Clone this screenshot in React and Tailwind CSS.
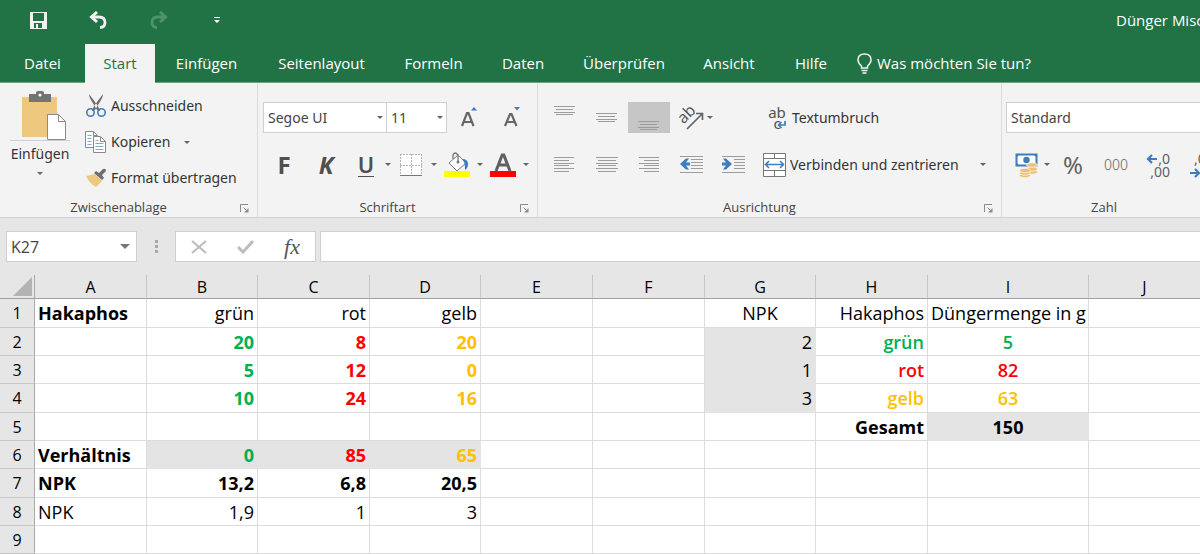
import React, { useState } from "react";

const TABS = [
  { label: "Datei", width: "w-[85px]" },
  { label: "Start", width: "w-[70px]" },
  { label: "Einfügen", width: "w-[103px]" },
  { label: "Seitenlayout", width: "w-[127px]" },
  { label: "Formeln", width: "w-[97px]" },
  { label: "Daten", width: "w-[82px]" },
  { label: "Überprüfen", width: "w-[120px]" },
  { label: "Ansicht", width: "w-[90px]" },
  { label: "Hilfe", width: "w-[74px]" },
];

const COLUMNS = [
  { name: "A", width: "w-[112px]" },
  { name: "B", width: "w-[111px]" },
  { name: "C", width: "w-[112px]" },
  { name: "D", width: "w-[111px]" },
  { name: "E", width: "w-[112px]" },
  { name: "F", width: "w-[112px]" },
  { name: "G", width: "w-[111px]" },
  { name: "H", width: "w-[112px]" },
  { name: "I", width: "w-[161px]" },
  { name: "J", width: "" },
];

const ROWS = [1, 2, 3, 4, 5, 6, 7, 8, 9];

const green = "text-[#00b050]";
const red = "text-[#ff0000]";
const yellow = "text-[#ffc000]";

// Cell contents, keyed by address
const CELLS = {
  A1: ["Hakaphos", "text-left font-bold"],
  B1: ["grün", "text-right"],
  C1: ["rot", "text-right"],
  D1: ["gelb", "text-right"],
  G1: ["NPK", "text-center"],
  H1: ["Hakaphos", "text-right"],
  I1: ["Düngermenge in g", "text-center"],
  B2: ["20", `text-right font-bold ${green}`],
  C2: ["8", `text-right font-bold ${red}`],
  D2: ["20", `text-right font-bold ${yellow}`],
  G2: ["2", "text-right"],
  H2: ["grün", `text-right font-semibold ${green}`],
  I2: ["5", `text-center font-semibold ${green}`],
  B3: ["5", `text-right font-bold ${green}`],
  C3: ["12", `text-right font-bold ${red}`],
  D3: ["0", `text-right font-bold ${yellow}`],
  G3: ["1", "text-right"],
  H3: ["rot", `text-right font-semibold ${red}`],
  I3: ["82", `text-center font-semibold ${red}`],
  B4: ["10", `text-right font-bold ${green}`],
  C4: ["24", `text-right font-bold ${red}`],
  D4: ["16", `text-right font-bold ${yellow}`],
  G4: ["3", "text-right"],
  H4: ["gelb", `text-right font-semibold ${yellow}`],
  I4: ["63", `text-center font-semibold ${yellow}`],
  H5: ["Gesamt", "text-right font-bold"],
  I5: ["150", "text-center font-bold"],
  A6: ["Verhältnis", "text-left font-bold"],
  B6: ["0", `text-right font-bold ${green}`],
  C6: ["85", `text-right font-bold ${red}`],
  D6: ["65", `text-right font-bold ${yellow}`],
  A7: ["NPK", "text-left font-bold"],
  B7: ["13,2", "text-right font-bold"],
  C7: ["6,8", "text-right font-bold"],
  D7: ["20,5", "text-right font-bold"],
  A8: ["NPK", "text-left"],
  B8: ["1,9", "text-right"],
  C8: ["1", "text-right"],
  D8: ["3", "text-right"],
};

const SHADED = ["G2", "G3", "G4", "I5", "B6", "C6", "D6"];

const Caret = () => (
  <svg width="6" height="3" viewBox="0 0 6 3" fill="#666" className="shrink-0">
    <path d="M0 0h6L3 3z" />
  </svg>
);

const Launcher = () => (
  <svg width="9" height="9" viewBox="0 0 9 9" fill="none" stroke="#8a8a8a">
    <path d="M.5 8V.5H8M3.500 3.500l4 4" />
    <path d="M8.500 4v4.500H4z" fill="#8a8a8a" stroke="none" />
  </svg>
);

/* Ribbon group with its caption at the bottom */
const Group = ({ title, launcher, className, inset = "", children }) => (
  <section className={`flex h-[134px] shrink-0 flex-col ${className}`}>
    <div className={`flex-1 font-['Noto_Sans',sans-serif] ${inset}`}>{children}</div>
    <div className="flex h-[18px] items-center">
      <span className="flex-1 text-center text-[13px] text-[#444]">{title}</span>
      {launcher && (
        <button aria-label={`${title} Optionen`} className="mr-2 ml-[3px]">
          <Launcher />
        </button>
      )}
    </div>
  </section>
);

// Horizontal rules, each given as [x, y, width]
const Lines = ({ rules, children }) => (
  <svg width="42" height="31" viewBox="0 0 42 31" shapeRendering="crispEdges">
    {rules.map(([x, y, w], i) => (
      <rect key={i} x={x} y={y} width={w} height="1" fill="#9c9c9c" />
    ))}
    {children}
  </svg>
);

const vertical = (top) => [
  [10, top, 21],
  [12, top + 3, 17],
  [10, top + 6, 21],
  [12, top + 8, 17],
];

const IconButton = ({ label, className = "", children }) => (
  <button
    aria-label={label}
    className={`flex h-[31px] shrink-0 items-center justify-center hover:bg-[#dadada] ${className}`}
  >
    {children}
  </button>
);

const Combo = ({ label, value, className, caret = true }) => (
  <label className={`relative flex h-[31px] shrink-0 border border-[#d0d0d0] bg-white ${className}`}>
    <span className="sr-only">{label}</span>
    <select
      defaultValue={value}
      className="w-full appearance-none bg-transparent px-1 text-sm text-[#444] outline-none"
    >
      <option>{value}</option>
    </select>
    {caret && (
      <span className="pointer-events-none absolute top-[13px] right-[3px]">
        <Caret />
      </span>
    )}
  </label>
);

const Clipboard = () => (
  <Group title="Zwischenablage" launcher className="w-[258px] border-r border-[#dcdcdc]">
    <div className="flex">
      <button className="flex w-20 flex-col items-center pt-2 text-sm text-[#333]">
        <svg width="60" height="50" viewBox="0 0 60 50">
          <path d="M12 6h35v40H12z" fill="#edc87e" />
          <path d="M19 3h7V2q0-2 2-2h4q2 0 2 2v1h7v8H19z" fill="#737373" />
          <circle cx="30" cy="4" r="1.500" fill="#fff" />
          <path d="M37.500 23.500h11l7 7v18h-18z" fill="#fff" stroke="#8a8a8a" />
          <path d="M48.500 23.500v7h7" fill="none" stroke="#8a8a8a" />
          <path d="M0 49.500h60" stroke="#cfcfcf" />
        </svg>
        <span className="mt-[3px] mb-2">Einfügen</span>
        <Caret />
      </button>
      <div className="flex flex-col pt-[5px] pl-[5px] text-sm text-[#333]">
        <button className="flex h-9 items-center gap-1">
          <svg width="22" height="24" viewBox="0 0 22 24">
            <path d="M4 0q0 3 2 6l6 10 3 1-2-5zM18 0q0 3-2 6l-6 10-3 1 2-5z" fill="#6b6b6b" />
            <g fill="none" stroke="#3f7cbf" strokeWidth="1.600">
              <circle cx="5.500" cy="18.500" r="3.700" />
              <circle cx="16.500" cy="18.500" r="3.700" />
            </g>
          </svg>
          Ausschneiden
        </button>
        <button className="flex h-9 items-center gap-1">
          <svg width="22" height="24" viewBox="0 0 22 24">
            <g fill="#fff" stroke="#8a8a8a">
              <path d="M.500 1.500h8l4 4v12H.500z" />
              <path d="M8.500 6.500h7l5 5v11h-12z" />
            </g>
            <path d="M8.500 1.500v4h4M15.500 6.500v5h5" fill="none" stroke="#8a8a8a" />
            <path
              d="M2.500 5.500h4M2.500 8.500h4M2.500 11.500h4M2.500 14.500h4M10.500 10.500h3M10.500 13.500h8M10.500 16.500h8M10.500 19.500h8"
              stroke="#7fa9d6"
            />
          </svg>
          Kopieren
          <span className="ml-[10px]">
            <Caret />
          </span>
        </button>
        <button className="flex h-9 items-center gap-1">
          <svg width="22" height="20" viewBox="0 0 22 20">
            <path d="M1 8l9-2 7 7-6 6Q5 16 1 8z" fill="#edc87e" />
            <path d="M9 5l2-2 3 2 4-4q3-1 3 2l-4 4 2 3-2 2z" fill="#6f6f6f" />
          </svg>
          Format übertragen
        </button>
      </div>
    </div>
  </Group>
);

const FontGroup = () => (
  <Group
    title="Schriftart"
    launcher
    className="w-[280px] border-r border-[#dcdcdc]"
    inset="pl-[5px]"
  >
    <div className="flex items-center pt-[19px]">
      <Combo label="Schriftart" value="Segoe UI" className="w-[124px]" />
      <Combo label="Schriftgrad" value="11" className="w-[60px] border-l-0" />
      <IconButton label="Schriftgrad vergrößern" className="w-[43px]">
        <svg width="18" height="24" viewBox="0 0 18 24">
          <path d="M2 20L7 7h1.500L13.500 20M4 16h8" fill="none" stroke="#666" strokeWidth="2.200" />
          <path d="M11 4.500h6l-3-3.500z" fill="#3f7cbf" />
        </svg>
      </IconButton>
      <IconButton label="Schriftgrad verkleinern" className="w-[43px]">
        <svg width="18" height="24" viewBox="0 0 18 24">
          <path d="M2 20L7 8h1.500L13.500 20M4 16h8" fill="none" stroke="#666" strokeWidth="2.200" />
          <path d="M11 1h6l-3 3.500z" fill="#3f7cbf" />
        </svg>
      </IconButton>
    </div>
    <div className="flex items-center pt-4 text-[#505050]">
      <IconButton label="Fett" className="w-[42px] text-2xl font-bold">
        F
      </IconButton>
      <IconButton label="Kursiv" className="w-[42px] text-2xl font-bold italic">
        K
      </IconButton>
      <IconButton label="Unterstrichen" className="w-[38px]">
        <span className="border-b border-[#505050] text-[22px] leading-6 font-semibold">U</span>
      </IconButton>
      <Caret />
      <IconButton label="Rahmen" className="w-10">
        <svg width="22" height="22" viewBox="0 0 22 22">
          <path d="M0 0h22v22H0z" fill="#fff" />
          <path
            d="M0 .500h22M.500 0v22M21.500 0v22M0 11.500h22M11.500 0v22"
            stroke="#b4b4b4"
            strokeDasharray="2 1"
          />
          <path d="M0 21.500h22" stroke="#777" />
        </svg>
      </IconButton>
      <Caret />
      <IconButton label="Füllfarbe" className="w-10">
        <svg width="26" height="26" viewBox="0 0 26 26">
          <path d="M0 19h26v6H0z" fill="#ffff00" />
          <path d="M5 11l9-8 8 8-9 8z" fill="#fff" stroke="#777" />
          <path d="M9 7V3q2-4 5 0v7" fill="none" stroke="#777" strokeWidth="1.300" />
          <circle cx="14" cy="10" r="1.500" fill="#777" />
          <path d="M18 7q6 0 6 5 0 4-3 6 0-6-1-8z" fill="#3f7cbf" />
        </svg>
      </IconButton>
      <Caret />
      <IconButton label="Schriftfarbe" className="w-10">
        <svg width="26" height="26" viewBox="0 0 26 26">
          <path d="M6 19L12.200 3h1.600L20 19M8 13h10" fill="none" stroke="#606060" strokeWidth="3" />
          <path d="M0 19h26v6H0z" fill="#ff0000" />
        </svg>
      </IconButton>
      <Caret />
    </div>
  </Group>
);

const AlignGroup = () => (
  <Group
    title="Ausrichtung"
    launcher
    className="w-[464px] border-r border-[#dcdcdc]"
    inset="pl-[6px]"
  >
    <div className="flex items-center pt-[19px]">
      <IconButton label="Oben ausrichten" className="w-[42px]">
        <Lines rules={vertical(4)} />
      </IconButton>
      <IconButton label="Zentriert ausrichten" className="w-[42px]">
        <Lines rules={vertical(11)} />
      </IconButton>
      <IconButton label="Unten ausrichten" className="w-[42px] bg-[#c6c6c6]">
        <Lines rules={vertical(19)} />
      </IconButton>
      <IconButton label="Ausrichtung" className="w-[92px] justify-start gap-[2px] pl-[9px]">
        <svg width="26" height="26" viewBox="0 0 26 26">
          <text
            x="4"
            y="18"
            fontSize="16"
            fontWeight="500"
            fill="#505050"
            fontFamily="Open Sans, sans-serif"
            transform="rotate(-45 6 18)"
          >
            ab
          </text>
          <path d="M8 24L23 9M17 8.500h6.500V15" fill="none" stroke="#606060" strokeWidth="1.600" />
        </svg>
        <Caret />
      </IconButton>
      <button className="flex h-[31px] items-center gap-[6px] pl-[6px] text-sm text-[#333]">
        <span className="relative flex w-[18px] flex-col text-[15px] leading-[11px] text-[#505050]">
          <span>ab</span>
          <span>c</span>
          <svg width="9" height="8" viewBox="0 0 9 8" className="absolute right-0 bottom-0">
            <path d="M8 0v4H1.500M4.500 1L1.500 4l3 3" fill="none" stroke="#3f7cbf" strokeWidth="1.700" />
          </svg>
        </span>
        Textumbruch
      </button>
    </div>
    <div className="flex items-center pt-4">
      <IconButton label="Linksbündig" className="w-[42px]">
        <Lines
          rules={[[10, 8, 20], [10, 11, 15], [10, 14, 20], [10, 16, 15], [10, 19, 20], [10, 22, 15]]}
        />
      </IconButton>
      <IconButton label="Zentriert" className="w-[42px]">
        <Lines
          rules={[[10, 8, 22], [12, 11, 18], [10, 14, 22], [12, 16, 18], [10, 19, 22], [12, 22, 18]]}
        />
      </IconButton>
      <IconButton label="Rechtsbündig" className="w-[42px]">
        <Lines
          rules={[[11, 8, 20], [16, 11, 15], [11, 14, 20], [16, 16, 15], [11, 19, 20], [16, 22, 15]]}
        />
      </IconButton>
      <IconButton label="Einzug verkleinern" className="w-[42px]">
        <Lines
          rules={[[10, 7, 23], [21, 10, 12], [21, 13, 12], [21, 16, 12], [21, 19, 12], [10, 23, 23]]}
        >
          <path
            d="M20 13.500h-4l3-4h-3l-6 5.500 6 5.500h3l-3-4h4z"
            fill="#3f7cbf"
            shapeRendering="auto"
          />
        </Lines>
      </IconButton>
      <IconButton label="Einzug vergrößern" className="w-[42px]">
        <Lines
          rules={[[10, 7, 23], [22, 10, 11], [22, 13, 11], [22, 16, 11], [22, 19, 11], [10, 23, 23]]}
        >
          <path
            d="M10 13.500h4l-3-4h3l6 5.500-6 5.500h-3l3-4h-4z"
            fill="#3f7cbf"
            shapeRendering="auto"
          />
        </Lines>
      </IconButton>
      <button className="flex h-[31px] items-center gap-1 pl-[9px] text-sm text-[#333]">
        <svg width="23" height="24" viewBox="0 0 23 24">
          <path
            d="M.500.500h22v23H.500zM0 5.500h23M0 17.500h23M11.500 0v5.500M11.500 17.500V24"
            fill="#fff"
            stroke="#777"
          />
          <path
            d="M2.500 11.500h18M6 8l-3.500 3.500L6 15M17 8l3.500 3.500L17 15"
            fill="none"
            stroke="#3f7cbf"
            strokeWidth="1.600"
          />
        </svg>
        <span className="w-[186px] text-left">Verbinden und zentrieren</span>
        <Caret />
      </button>
    </div>
  </Group>
);

const NumberGroup = () => (
  <Group title="Zahl" className="min-w-[204px] flex-1" inset="pl-1">
    <div className="flex items-center pt-[19px]">
      <Combo label="Zahlenformat" value="Standard" className="w-full border-r-0" caret={false} />
    </div>
    <div className="flex items-center pt-4 text-[#606060]">
      <IconButton label="Buchhaltungsformat" className="w-[38px] pl-1">
        <svg width="24" height="26" viewBox="0 0 24 26">
          <path d="M1.500 2.500h20v11h-20z" fill="#fff" stroke="#3f7cbf" strokeWidth="2" />
          <path d="M1 2h4L1 6zM22 2v4l-4-4zM1 14v-4l4 4z" fill="#3f7cbf" />
          <circle cx="11.500" cy="8" r="3.200" fill="#3f7cbf" />
          <g fill="#edc07a" stroke="#f7f1e4" strokeWidth=".800">
            <ellipse cx="17" cy="20" rx="5.500" ry="2.200" />
            <ellipse cx="17" cy="17" rx="5.500" ry="2.200" />
            <ellipse cx="17" cy="13" rx="5.500" ry="2.200" />
            <ellipse cx="10" cy="23.500" rx="5.500" ry="2.200" />
            <ellipse cx="10" cy="21" rx="5.500" ry="2.200" />
            <ellipse cx="10" cy="18.500" rx="5.500" ry="2.200" />
          </g>
        </svg>
      </IconButton>
      <Caret />
      <IconButton label="Prozentformat" className="w-[46px] text-2xl">
        %
      </IconButton>
      <IconButton label="1.000er-Trennzeichen" className="w-10 text-sm font-light">
        000
      </IconButton>
      <IconButton label="Dezimalstelle hinzufügen" className="w-11">
        <span className="relative flex w-6 flex-col items-end text-sm leading-[13px]">
          <span>,0</span>
          <span>,00</span>
          <svg width="11" height="10" viewBox="0 0 11 10" className="absolute top-[2px] left-0">
            <path d="M11 5H2M6 1L2 5l4 4" fill="none" stroke="#3f7cbf" strokeWidth="2.200" />
          </svg>
        </span>
      </IconButton>
      <IconButton label="Dezimalstelle löschen" className="w-11">
        <span className="relative flex w-6 flex-col items-start text-sm leading-[13px]">
          <span className="pl-1">,00</span>
          <span className="pl-3">,0</span>
          <svg width="11" height="10" viewBox="0 0 11 10" className="absolute bottom-0 left-0">
            <path d="M0 5h9M5 1l4 4-4 4" fill="none" stroke="#3f7cbf" strokeWidth="2.200" />
          </svg>
        </span>
      </IconButton>
    </div>
  </Group>
);

const TitleBar = () => (
  <div className="flex h-10 items-center bg-[#217346] pl-[30px] text-white">
    <button aria-label="Speichern" className="w-[59px]">
      <svg width="17" height="17" viewBox="0 0 17 17" fill="#f2f2f2">
        <path fillRule="evenodd" d="M0 0h17v17H0zM3 1v8h11V1zM4 11v5h2v-4h2v4h4v-5z" />
      </svg>
    </button>
    <button aria-label="Rückgängig" className="w-[61px]">
      <svg width="18" height="18" viewBox="0 0 18 18" fill="none" stroke="#f2f2f2">
        <path d="M8 1L2.500 6 8 11" strokeWidth="3" />
        <path d="M3 6h7q6 0 6 5.500 0 5-5 5" strokeWidth="2.800" />
      </svg>
    </button>
    <button aria-label="Wiederholen" className="w-[63px]">
      <svg width="18" height="18" viewBox="0 0 18 18" fill="none" stroke="#4f9270">
        <path d="M10 1l5.500 5L10 11" strokeWidth="3" />
        <path d="M15 6H8Q2 6 2 11.500q0 5 5 5" strokeWidth="2.800" />
      </svg>
    </button>
    <button aria-label="Symbolleiste anpassen">
      <svg width="8" height="7" viewBox="0 0 8 7" fill="#fff">
        <path d="M1 0h6v1H1zM1 3h6L4 6z" />
      </svg>
    </button>
    <div className="flex-1"></div>
    <span className="w-[84px] overflow-hidden text-[15px] whitespace-nowrap">Dünger Misc</span>
  </div>
);

const Tabs = ({ active, onSelect }) => (
  <nav className="flex h-[43px] items-end border-b border-[#69a583] bg-[#217346] text-[15px] text-white">
    {TABS.map((tab) => (
      <button
        key={tab.label}
        onClick={() => onSelect(tab.label)}
        className={`-mb-px h-[39px] whitespace-nowrap ${tab.width} ${
          active === tab.label ? "bg-[#f3f3f3] text-[#217346]" : ""
        }`}
      >
        {tab.label}
      </button>
    ))}
    <button className="-mb-px flex h-[39px] items-center gap-[5px] pl-[9px] whitespace-nowrap">
      <svg width="15" height="21" viewBox="0 0 15 21" fill="none" stroke="#f2f2f2" strokeWidth="1.500">
        <path d="M4.500 15v-2Q1 10 1 7q0-6 6.500-6T14 7q0 3-3.500 6v2z" />
        <path d="M4.500 17.500h6M5.500 20h4" />
      </svg>
      Was möchten Sie tun?
    </button>
  </nav>
);

const FormulaBar = () => (
  <div className="flex h-[57px] items-start pt-[13px] pl-[6px]">
    <div className="relative flex h-[31px] w-[131px] items-center border border-[#cfcfcf] bg-white">
      <input
        aria-label="Namenfeld"
        defaultValue="K27"
        className="w-full bg-transparent px-1 text-base text-[#444] outline-none"
      />
      <svg width="10" height="5" viewBox="0 0 10 5" fill="#777" className="absolute right-[6px]">
        <path d="M0 0h10L5 5z" />
      </svg>
    </div>
    <div className="flex h-[31px] w-[38px] items-center justify-center">
      <svg width="3" height="14" viewBox="0 0 3 14" fill="#a8a8a8">
        <path d="M0 0h3v3H0zM0 5h3v3H0zM0 10h3v3H0z" />
      </svg>
    </div>
    <div className="flex h-[31px] w-[141px] items-center justify-around border border-[#cfcfcf] bg-white">
      <button aria-label="Abbrechen">
        <svg width="16" height="14" viewBox="0 0 16 14" fill="none" stroke="#bdbdbd" strokeWidth="2.200">
          <path d="M1 1l14 12M15 1L1 13" />
        </svg>
      </button>
      <button aria-label="Eingeben">
        <svg width="17" height="14" viewBox="0 0 17 14" fill="none" stroke="#bdbdbd" strokeWidth="3">
          <path d="M1 7l5 5L16 1" />
        </svg>
      </button>
      <button
        aria-label="Funktion einfügen"
        className="font-['Liberation_Serif',serif] text-[22px] leading-6 text-[#555] italic"
      >
        fx
      </button>
    </div>
    <input
      aria-label="Bearbeitungsleiste"
      className="ml-1 h-[31px] flex-1 border border-r-0 border-[#cfcfcf] bg-white px-1 text-[15px] outline-none"
    />
  </div>
);

const Sheet = () => (
  <table className="w-full table-fixed border-separate border-spacing-0 text-lg leading-6 text-black">
    <colgroup>
      <col className="w-[35px]" />
      {COLUMNS.map((col) => (
        <col key={col.name} className={col.width} />
      ))}
    </colgroup>
    <thead>
      <tr className="h-6 bg-[#e6e6e6] text-base leading-5">
        <td className="border-r border-b border-r-[#ababab] border-b-[#9f9f9f] p-0">
          <svg width="19" height="19" viewBox="0 0 19 19" fill="#b3b3b3" className="mr-[2px] ml-auto">
            <path d="M19 0v19H0z" />
          </svg>
        </td>
        {COLUMNS.map((col) => (
          <th
            key={col.name}
            className="border-r border-b border-r-[#c6c6c6] border-b-[#9f9f9f] p-0 font-normal last:border-r-0"
          >
            {col.name}
          </th>
        ))}
      </tr>
    </thead>
    <tbody>
      {ROWS.map((row) => (
        <tr key={row} className={row % 3 === 1 ? "h-[29px]" : "h-[28px]"}>
          <th className="border-r border-b border-r-[#ababab] border-b-[#c6c6c6] bg-[#e6e6e6] p-0 text-base font-normal">
            {row}
          </th>
          {COLUMNS.map((col) => {
            const id = col.name + row;
            const [text, style] = CELLS[id] || ["", ""];
            const shade = SHADED.includes(id)
              ? "border-[#e4e4e4] bg-[#e4e4e4]"
              : "border-[#dcdcdc] bg-white";
            return (
              <td
                key={id}
                className={`border-r border-b px-[3px] py-0 whitespace-nowrap last:border-r-0 ${shade} ${style}`}
              >
                {text}
              </td>
            );
          })}
        </tr>
      ))}
    </tbody>
  </table>
);

const App = () => {
  const [activeTab, setActiveTab] = useState("Start");

  return (
    <div className="min-h-screen overflow-hidden bg-[#e6e6e6] font-['Open_Sans','Noto_Sans',sans-serif]">
      <TitleBar />
      <Tabs active={activeTab} onSelect={setActiveTab} />
      {/* Ribbon */}
      <div className="flex overflow-hidden border-b border-[#d2d2d2] bg-[#f3f3f3]">
        <Clipboard />
        <FontGroup />
        <AlignGroup />
        <NumberGroup />
      </div>
      <FormulaBar />
      <Sheet />
    </div>
  );
};

export default App;
